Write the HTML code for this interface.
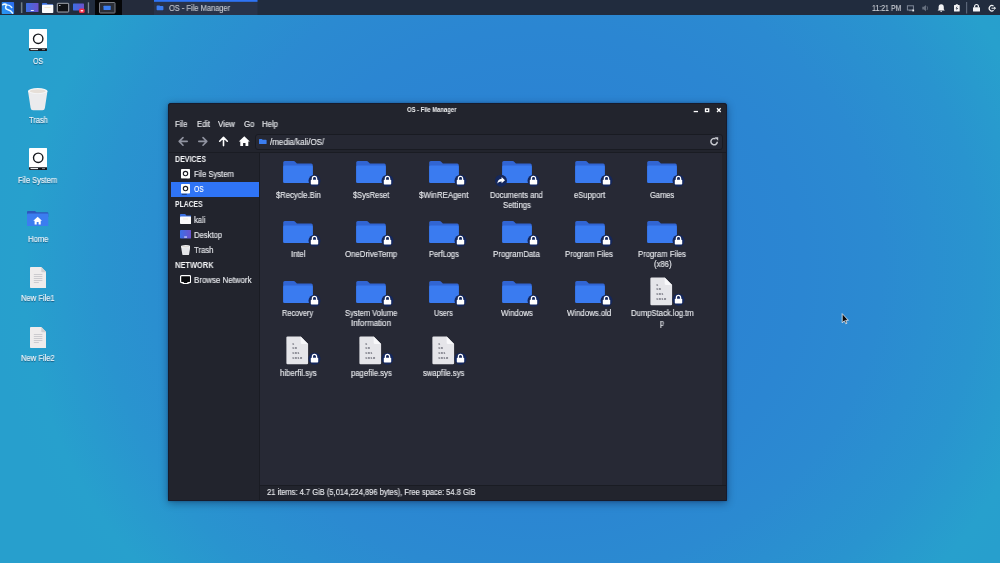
<!DOCTYPE html>
<html><head><meta charset="utf-8">
<style>
*{margin:0;padding:0;box-sizing:border-box}
html,body{width:1000px;height:563px;overflow:hidden}
body{font-family:"Liberation Sans",sans-serif;position:relative;
background:radial-gradient(ellipse 550px 500px at 540px 268px,#2b80d3 0%,#2b83d3 30%,#2b86d2 48%,#2b8ad1 62%,#2994cf 80%,#27a0cd 94%,#279fcd 100%);
color:#dfe1e6}
.abs{position:absolute}
#panel{position:absolute;left:0;top:0;width:1000px;height:15px;background:#212c3e}
.f{position:absolute;white-space:nowrap;transform-origin:0 0;will-change:transform;-webkit-text-stroke:.14px currentColor}
#win{position:absolute;left:168px;top:103px;width:559px;height:398px;background:#22242d;border-radius:3px 3px 1px 1px;box-shadow:0 2px 9px rgba(0,0,30,.38),0 0 2px rgba(0,0,30,.3)}
</style></head><body>

<svg width="0" height="0" style="position:absolute">
 <defs>
  <linearGradient id="gd" x1="0" y1="0" x2="1" y2="0"><stop offset="0" stop-color="#3b6fe6"/><stop offset="1" stop-color="#6b52cb"/></linearGradient>
  <g id="folder">
   <path d="M0 1.600Q0 0 1.6 0H10.400Q11.4 0 12.2 .9L13.7 2.600H28Q29.6 2.6 29.6 4.200V20.400Q29.6 22 28 22H1.600Q0 22 0 20.400Z" fill="#3165d3"/>
   <path d="M0 5.800Q0 4.4 1.5 4.400H28.100Q29.6 4.4 29.6 5.800V20.400Q29.6 22 28 22H1.600Q0 22 0 20.400Z" fill="#3a7bf0"/>
  </g>
  <g id="lock">
   <circle cx="0" cy="0" r="6" fill="#14275c"/>
   <path d="M-2.1 -.8V-2.300A2.1 2.1 0 0 1 2.1 -2.300V-.8" fill="none" stroke="#fff" stroke-width="1.3"/>
   <rect x="-3.7" y="-1" width="7.4" height="4.7" rx=".7" fill="#fff"/>
  </g>
  <g id="link">
   <circle cx="0" cy="0" r="6" fill="#14275c"/>
   <path d="M.6 -3.600L4 -.5L.6 2.600V.8Q-2.2 .6 -3.6 2.900Q-3.6 -1.6 .6 -2Z" fill="#fff"/>
  </g>
  <g id="file">
   <path d="M0 1.200Q0 0 1.2 0H14.300L21.7 7.600V26.700Q21.7 27.9 20.5 27.900H1.200Q0 27.9 0 26.700Z" fill="#e5e5e9"/>
   <path d="M14.3 0L21.7 7.600H15.500Q14.3 7.6 14.3 6.400Z" fill="#f8f8fa"/>
   <g fill="#6c6d78" font-family="Liberation Mono, monospace" font-weight="bold" font-size="4.4">
    <text x="5.4" y="8.5">1</text><text x="5.4" y="13.1">10</text><text x="5.4" y="17.6">101</text><text x="5.4" y="22.3">1010</text>
   </g>
  </g>
  <g id="drive"><!-- 18.3 x 22 -->
   <rect x="0" y="0" width="18.3" height="22" rx="1" fill="#fff"/>
   <path d="M0 19.300H18.300V21Q18.3 22 17.3 22H1Q0 22 0 21Z" fill="#14161c"/>
   <rect x="1.5" y="20.1" width="7.5" height="1" fill="#fff"/>
   <rect x="13" y="20.1" width="3" height="1" fill="#8a8d96"/>
   <circle cx="9.2" cy="9.8" r="4.7" fill="none" stroke="#16181e" stroke-width="1.4"/>
  </g>
  <g id="sdrive"><!-- 9 x 9.6 -->
   <rect x="0" y="0" width="9" height="9.6" rx=".8" fill="#fff"/>
   <circle cx="4.5" cy="4.6" r="2.2" fill="none" stroke="#1a1c24" stroke-width="1.1"/>
   <rect x=".8" y="9.8" width="5" height=".9" fill="#14161c" opacity=".7"/>
  </g>
 </defs>
</svg>


<div id="panel">
 <svg class="abs" style="left:0;top:0" width="270" height="15" viewBox="0 0 270 15">
  <linearGradient id="gk" x1="0" y1="1" x2="1" y2="0"><stop offset="0" stop-color="#2a9cf2"/><stop offset="1" stop-color="#2a68ee"/></linearGradient>
  <rect x="1.7" y="2" width="12.4" height="12" rx=".8" fill="url(#gk)"/>
  <path d="M2 4.400Q3.8 2.6 6.4 3.600L7.2 5.500Q4.6 4.6 2 5.600Z" fill="#eefcff"/>
  <path d="M6.4 4.900Q9.6 4.6 11.8 7.5" fill="none" stroke="#dff6ff" stroke-width="1.4" stroke-linecap="round"/>
  <path d="M6.4 5.200Q4.4 8.6 7.4 9.500Q11 10.4 12.6 13.2" fill="none" stroke="#e2f8ff" stroke-width="1.5" stroke-linecap="round"/>
  <rect x="20.9" y="2.3" width="1.5" height="10.7" fill="#6f7d86"/>
  <rect x="26" y="3" width="12.5" height="9" rx=".6" fill="url(#gd)"/><rect x="30.8" y="10" width="3" height=".9" fill="#fff"/>
  <path d="M42 3.800Q42 3 42.8 3H46.600L47.6 4.200H53V6.500H42Z" fill="#3b6fe0"/>
  <rect x="42" y="4.8" width="11.3" height="8.2" rx=".7" fill="#fbfbfc"/><rect x="44.5" y="7" width="6" height=".8" fill="#f0e4c8"/>
  <rect x="57.3" y="3.3" width="11.4" height="8.7" rx=".6" fill="#101216" stroke="#b4bac2" stroke-width=".9"/><rect x="59" y="5" width="1.5" height=".9" fill="#cfd2d8"/>
  <rect x="73" y="3.6" width="11" height="6.8" rx=".6" fill="url(#gd)"/>
  <rect x="79" y="8.6" width="5.7" height="4.3" rx="1.5" fill="#f02c48"/><rect x="80.6" y="10" width="2.6" height="1.5" rx=".5" fill="#ffe8ec"/>
  <rect x="87.8" y="2.3" width="1.3" height="11" fill="#7d8a96"/>
  <rect x="95" y="0" width="27" height="15" fill="#050608"/>
  <rect x="99.5" y="2.5" width="15.5" height="10.5" rx=".6" fill="#2b2e36" stroke="#7a7d85" stroke-width="1"/>
  <rect x="103.5" y="5.8" width="7.2" height="4.2" rx=".4" fill="#3b7df0"/>
  <rect x="122" y="0" width="32" height="15" fill="#242b3b"/>
  <rect x="154" y="0" width="103.5" height="15" fill="#28334a"/>
  <rect x="154" y="0" width="103.5" height="1.8" fill="#2f74f5"/>
  <path d="M156.6 6.100Q156.6 5.4 157.3 5.400H159.400L160.2 6.100H162.700Q163.4 6.1 163.4 6.800V9.500Q163.4 10.2 162.7 10.200H157.300Q156.6 10.2 156.6 9.500Z" fill="#3b7df0"/>
 </svg>
 <div class="f" style="left:169.00px;top:5.00px;font-size:8.2px;line-height:8.2px;color:#c3c7cf;transform:scaleX(0.9136);">OS - File Manager</div>
 <div class="f" style="left:871.90px;top:5.00px;font-size:8.2px;line-height:8.2px;color:#c9cdd4;transform:scaleX(0.8525);">11:21 PM</div>
 <svg class="abs" style="left:900px;top:0" width="100" height="15" viewBox="900 0 100 15">
  <rect x="907.4" y="5.8" width="6" height="4.2" fill="none" stroke="#7f8898" stroke-width="1"/><rect x="909" y="10.3" width="3" height=".8" fill="#7f8898"/><rect x="912.3" y="9.6" width="1.8" height="1.8" fill="#eef0f3"/>
  <path d="M922.3 6.800H923.800L926 5V11.200L923.8 9.400H922.300Z" fill="#66707f"/><path d="M927 6.200Q928.3 8.1 927 10" fill="none" stroke="#66707f" stroke-width=".8"/>
  <path d="M941.2 4.200Q943.8 4.4 943.8 7.300V9.200L944.8 10.400H937.600L938.6 9.200V7.300Q938.6 4.4 941.2 4.200Z" fill="#f2f3f5"/><rect x="940.3" y="10.8" width="1.8" height=".9" rx=".4" fill="#f2f3f5"/>
  <path d="M954 5.400Q954 4.9 954.5 4.900H955.800V4.300H957.900V4.900H959.200Q959.7 4.9 959.7 5.400V11Q959.7 11.5 959.2 11.500H954.500Q954 11.5 954 11Z" fill="#f2f3f5"/>
  <path d="M957.4 6L955.6 8.500H956.800L956.3 10.400L958.1 7.900H956.900Z" fill="#212c3e"/>
  <rect x="966" y="2" width="1.2" height="11.5" fill="#5b6678"/>
  <path d="M974.6 7.400V6.400A1.9 1.9 0 0 1 978.4 6.400V7.4" fill="none" stroke="#f2f3f5" stroke-width="1.2"/><rect x="973" y="7.2" width="7" height="4.3" rx=".5" fill="#f2f3f5"/>
  <path d="M993.6 6.100A2.7 2.7 0 1 0 993.6 10.3" fill="none" stroke="#f2f3f5" stroke-width="1.2"/><path d="M991.5 8.200H995M994 7L995.6 8.200L994 9.4" fill="none" stroke="#f2f3f5" stroke-width="1"/>
 </svg>
</div>


<svg class="abs" style="left:28.800px;top:28.9px" width="18.3" height="22" viewBox="0 0 18.3 22"><use href="#drive"/></svg>
<svg class="abs" style="left:28.200px;top:88.4px" width="19.5" height="22.2" viewBox="0 0 19.5 22.2">
 <path d="M0 3L2.6 20Q2.9 22.2 5 22.200H14.500Q16.6 22.2 16.9 20L19.5 3Z" fill="#ebebed"/>
 <ellipse cx="9.750" cy="3" rx="9.750" ry="3" fill="#f6f7f9"/><ellipse cx="9.750" cy="3.2" rx="8" ry="2" fill="#e6dfd8"/>
</svg>
<svg class="abs" style="left:28.800px;top:147.8px" width="18.3" height="22" viewBox="0 0 18.3 22"><use href="#drive"/></svg>
<svg class="abs" style="left:27.300px;top:210.5px" width="21.3" height="15.8" viewBox="0 0 21.3 15.8">
 <path d="M0 1Q0 0 1 0H8L9.5 1.200H20.300Q21.3 1.2 21.3 2.200V6H0Z" fill="#2d58bd"/>
 <rect x="0" y="2.6" width="21.3" height="13.2" rx="1" fill="#3b7df0"/>
 <path d="M10.650 5.800L6.3 9.700H7.600V13.400H9.700V10.900H11.600V13.400H13.700V9.700H15Z" fill="#fff"/>
</svg>
<svg class="abs" style="left:29.700px;top:267.3px" width="16.5" height="21" viewBox="0 0 16.5 21">
 <path d="M0 .8Q0 0 .8 0H11.300L16.5 5.200V20.200Q16.5 21 15.7 21H.8Q0 21 0 20.200Z" fill="#efecec"/>
 <path d="M11.3 0L16.5 5.200H12.100Q11.3 5.2 11.3 4.400Z" fill="#d2d0d2"/>
 <g fill="#c4c3c8"><rect x="3.8" y="7.2" width="8.6" height=".8"/><rect x="3.8" y="9.2" width="8.6" height=".8"/><rect x="3.8" y="11.2" width="8.6" height=".8"/><rect x="3.8" y="13.2" width="8.6" height=".8"/><rect x="3.8" y="15.2" width="5" height=".8"/></g>
</svg>
<svg class="abs" style="left:29.700px;top:326.8px" width="16.5" height="21" viewBox="0 0 16.5 21">
 <path d="M0 .8Q0 0 .8 0H11.300L16.5 5.200V20.200Q16.5 21 15.7 21H.8Q0 21 0 20.200Z" fill="#efecec"/>
 <path d="M11.3 0L16.5 5.200H12.100Q11.3 5.2 11.3 4.400Z" fill="#d2d0d2"/>
 <g fill="#c4c3c8"><rect x="3.8" y="7.2" width="8.6" height=".8"/><rect x="3.8" y="9.2" width="8.6" height=".8"/><rect x="3.8" y="11.2" width="8.6" height=".8"/><rect x="3.8" y="13.2" width="8.6" height=".8"/><rect x="3.8" y="15.2" width="5" height=".8"/></g>
</svg>
<div class="f" style="left:33.30px;top:58.00px;font-size:8.2px;line-height:8.2px;color:#f4f7fb;transform:scaleX(0.8609);text-shadow:0 .6px 1px rgba(0,20,50,.55);">OS</div>
<div class="f" style="left:29.10px;top:117.00px;font-size:8.2px;line-height:8.2px;color:#f4f7fb;transform:scaleX(0.9150);text-shadow:0 .6px 1px rgba(0,20,50,.55);">Trash</div>
<div class="f" style="left:17.80px;top:177.00px;font-size:8.2px;line-height:8.2px;color:#f4f7fb;transform:scaleX(0.9129);text-shadow:0 .6px 1px rgba(0,20,50,.55);">File System</div>
<div class="f" style="left:27.80px;top:236.00px;font-size:8.2px;line-height:8.2px;color:#f4f7fb;transform:scaleX(0.9327);text-shadow:0 .6px 1px rgba(0,20,50,.55);">Home</div>
<div class="f" style="left:21.10px;top:295.00px;font-size:8.2px;line-height:8.2px;color:#f4f7fb;transform:scaleX(0.9244);text-shadow:0 .6px 1px rgba(0,20,50,.55);">New File1</div>
<div class="f" style="left:21.10px;top:355.00px;font-size:8.2px;line-height:8.2px;color:#f4f7fb;transform:scaleX(0.9244);text-shadow:0 .6px 1px rgba(0,20,50,.55);">New File2</div>
<div id="win">
 <div class="abs" id="content" style="left:92px;top:49px;width:462px;height:333px;background:#272935"></div>
 <!-- title -->
 <div class="f" style="left:238.65px;top:4.00px;font-size:6.6px;line-height:6.6px;font-weight:bold;-webkit-text-stroke:0;color:#f2f3f5;transform:scaleX(0.8853);">OS - File Manager</div>
 <svg class="abs" style="left:520px;top:2px" width="36" height="10" viewBox="688 105 36 10">
  <rect x="693.7" y="110.9" width="4.3" height="1.3" fill="#fff"/>
  <rect x="705.5" y="108.9" width="3.2" height="2.7" fill="none" stroke="#fff" stroke-width="1.3"/>
  <path d="M717 108.300l3.7 3.700M720.7 108.300l-3.7 3.7" stroke="#fff" stroke-width="1.3"/>
 </svg>
 <!-- menu -->
 <div class="f" style="left:7.40px;top:18.00px;font-size:8.2px;line-height:8.2px;color:#e8eaee;transform:scaleX(0.9385);">File</div>
 <div class="f" style="left:28.60px;top:18.00px;font-size:8.2px;line-height:8.2px;color:#e8eaee;transform:scaleX(0.9342);">Edit</div>
 <div class="f" style="left:50.40px;top:18.00px;font-size:8.2px;line-height:8.2px;color:#e8eaee;transform:scaleX(0.9532);">View</div>
 <div class="f" style="left:75.80px;top:18.00px;font-size:8.2px;line-height:8.2px;color:#e8eaee;transform:scaleX(0.9508);">Go</div>
 <div class="f" style="left:94.20px;top:18.00px;font-size:8.2px;line-height:8.2px;color:#e8eaee;transform:scaleX(0.9488);">Help</div>
 <!-- toolbar -->
 <svg class="abs" style="left:8px;top:32px" width="80" height="14" viewBox="176 135 80 14" fill="none" stroke-linecap="round" stroke-linejoin="round">
  <path d="M187.2 141.400H179.400M183 137.600L179.2 141.400L183 145.2" stroke="#9093a0" stroke-width="1.6"/>
  <path d="M198.8 141.400H206.600M203 137.600L206.8 141.400L203 145.2" stroke="#9093a0" stroke-width="1.6"/>
  <path d="M223.5 145.600V137.600M219.7 141.200L223.5 137.400L227.3 141.2" stroke="#fff" stroke-width="1.6"/>
  <path d="M244.3 136.300L238.8 141.400H240.300V146H243.100V142.900H245.500V146H248.300V141.400H249.800Z" fill="#fff" stroke="none"/>
 </svg>
 <div class="abs" style="left:87px;top:31px;width:467.500px;height:16px;background:#262833;border:1px solid #191b22;border-radius:3px"></div>
 <svg class="abs" style="left:91.400px;top:36.200px" width="7.6" height="5" viewBox="0 0 7.6 5"><path d="M0 .6Q0 0 .6 0H2.800L3.6 .7H7Q7.6 .7 7.6 1.300V4.400Q7.6 5 7 5H.6Q0 5 0 4.400Z" fill="#3b7df0"/></svg>
 <div class="f" style="left:102.20px;top:36.00px;font-size:8.2px;line-height:8.2px;color:#e8eaee;transform:scaleX(0.9749);">/media/kali/OS/</div>
 <svg class="abs" style="left:541px;top:34px" width="10" height="10" viewBox="709 137 10 10" fill="none"><path d="M717.3 141.800A3.2 3.2 0 1 1 715.6 138.8" stroke="#c8cad0" stroke-width="1.5"/><path d="M714.6 137.200H718.200V140.800Z" fill="#c8cad0"/></svg>
 <!-- sidebar -->
 <div class="abs" style="left:0;top:48.500px;width:559px;height:1px;background:#1a1c23"></div>
 <div class="abs" style="left:91px;top:49px;width:1px;height:349px;background:#1a1c23"></div>
 <div class="abs" style="left:3.300px;top:79.300px;width:87.700px;height:14.700px;background:#2f74f5"></div>
  <div class="f" style="left:7.30px;top:53.00px;font-size:8.2px;line-height:8.2px;font-weight:bold;-webkit-text-stroke:0;color:#f2f3f5;transform:scaleX(0.8639);">DEVICES</div>
 <div class="f" style="left:25.90px;top:68.00px;font-size:8.2px;line-height:8.2px;color:#e8eaee;transform:scaleX(0.9316);">File System</div>
 <div class="f" style="left:25.90px;top:83.00px;font-size:8.2px;line-height:8.2px;color:#fff;transform:scaleX(0.8272);">OS</div>
 <div class="f" style="left:7.30px;top:98.00px;font-size:8.2px;line-height:8.2px;font-weight:bold;-webkit-text-stroke:0;color:#f2f3f5;transform:scaleX(0.8328);">PLACES</div>
 <div class="f" style="left:25.90px;top:114.00px;font-size:8.2px;line-height:8.2px;color:#e8eaee;transform:scaleX(0.9347);">kali</div>
 <div class="f" style="left:25.90px;top:129.00px;font-size:8.2px;line-height:8.2px;color:#e8eaee;transform:scaleX(0.9342);">Desktop</div>
 <div class="f" style="left:26.10px;top:144.00px;font-size:8.2px;line-height:8.2px;color:#e8eaee;transform:scaleX(0.9441);">Trash</div>
 <div class="f" style="left:7.30px;top:159.00px;font-size:8.2px;line-height:8.2px;font-weight:bold;-webkit-text-stroke:0;color:#f2f3f5;transform:scaleX(0.9112);">NETWORK</div>
 <div class="f" style="left:25.90px;top:174.00px;font-size:8.2px;line-height:8.2px;color:#e8eaee;transform:scaleX(0.9650);">Browse Network</div>
 
 <svg class="abs" style="left:13px;top:65.7px" width="10" height="11" viewBox="0 0 10 11"><use href="#sdrive"/></svg>
 <svg class="abs" style="left:13px;top:80.8px" width="10" height="11" viewBox="0 0 10 11"><use href="#sdrive"/></svg>
 <svg class="abs" style="left:11.8px;top:111.4px" width="11.2" height="10" viewBox="0 0 11.2 10">
  <path d="M0 .8Q0 0 .8 0H5.200L6.4 1.400H11.200V4H0Z" fill="#3b6fe0"/>
  <rect x="0" y="2.6" width="11.2" height="7.4" rx=".8" fill="#fbfbfc"/>
  <rect x="3" y="4.6" width="5" height=".8" fill="#f0e6d8"/>
 </svg>
 <svg class="abs" style="left:11.8px;top:127.0px" width="11.2" height="8.5" viewBox="0 0 11.2 8.5">
  <rect width="11.2" height="8.5" rx=".7" fill="url(#gd)"/><rect x="4.2" y="6.6" width="2.8" height=".9" fill="#fff"/>
 </svg>
 <svg class="abs" style="left:12.7px;top:141.7px" width="9.4" height="10.3" viewBox="0 0 9.4 10.3">
  <path d="M0 1.500L1.3 9.300Q1.5 10.3 2.5 10.300H6.900Q7.9 10.3 8.1 9.300L9.4 1.500Z" fill="#e4e5e8"/>
  <ellipse cx="4.7" cy="1.5" rx="4.7" ry="1.5" fill="#f4f5f7"/><ellipse cx="4.7" cy="1.6" rx="3.7" ry=".9" fill="#dcd8d4"/>
 </svg>
 <svg class="abs" style="left:11.8px;top:172.0px" width="11.2" height="9.2" viewBox="0 0 11.2 9.2">
  <path d="M.6 1.600Q.6 .6 1.6 .6H9.600Q10.6 .6 10.6 1.600V6.600Q10.6 7.6 9.6 7.600H8V8.600H3.200V7.600H1.600Q.6 7.6 .6 6.600Z" fill="#08090c" stroke="#fff" stroke-width="1.2"/>
 </svg>

 <!-- status -->
 <div class="abs" style="left:92px;top:381.500px;width:467px;height:1px;background:#1a1c23"></div>
 <div class="f" style="left:99.00px;top:386.00px;font-size:8.2px;line-height:8.2px;color:#e8eaee;transform:scaleX(0.9199);">21 items: 4.7 GiB (5,014,224,896 bytes), Free space: 54.8 GiB</div>
 <div class="abs" style="left:0;top:0;width:559px;height:398px;border:1px solid #171b2c;border-radius:3px 3px 1px 1px"></div>
 <!-- icons -->
 <svg class="abs" style="left:105.0px;top:52.0px;will-change:transform" width="50" height="36" viewBox="-25 -6 50 36"><use href="#folder" x="-14.8" y="0"/><use href="#lock" x="16.5" y="19.7"/></svg>
 <div class="f" style="left:107.60px;top:89.00px;font-size:8.2px;line-height:8.2px;color:#e8eaee;transform:scaleX(0.9362);">$Recycle.Bin</div>
 <svg class="abs" style="left:178.0px;top:52.0px;will-change:transform" width="50" height="36" viewBox="-25 -6 50 36"><use href="#folder" x="-14.8" y="0"/><use href="#lock" x="16.5" y="19.7"/></svg>
 <div class="f" style="left:184.85px;top:89.00px;font-size:8.2px;line-height:8.2px;color:#e8eaee;transform:scaleX(0.9155);">$SysReset</div>
 <svg class="abs" style="left:250.7px;top:52.0px;will-change:transform" width="50" height="36" viewBox="-25 -6 50 36"><use href="#folder" x="-14.8" y="0"/><use href="#lock" x="16.5" y="19.7"/></svg>
 <div class="f" style="left:250.95px;top:89.00px;font-size:8.2px;line-height:8.2px;color:#e8eaee;transform:scaleX(0.9611);">$WinREAgent</div>
 <svg class="abs" style="left:323.8px;top:52.0px;will-change:transform" width="50" height="36" viewBox="-25 -6 50 36"><use href="#folder" x="-14.8" y="0"/><use href="#link" x="-16" y="19.7"/><use href="#lock" x="16.5" y="19.7"/></svg>
 <div class="f" style="left:322.40px;top:89.00px;font-size:8.2px;line-height:8.2px;color:#e8eaee;transform:scaleX(0.9194);">Documents and</div>
 <div class="f" style="left:334.85px;top:99.00px;font-size:8.2px;line-height:8.2px;color:#e8eaee;transform:scaleX(0.9417);">Settings</div>
 <svg class="abs" style="left:396.5px;top:52.0px;will-change:transform" width="50" height="36" viewBox="-25 -6 50 36"><use href="#folder" x="-14.8" y="0"/><use href="#lock" x="16.5" y="19.7"/></svg>
 <div class="f" style="left:405.90px;top:89.00px;font-size:8.2px;line-height:8.2px;color:#e8eaee;transform:scaleX(0.9376);">eSupport</div>
 <svg class="abs" style="left:469.3px;top:52.0px;will-change:transform" width="50" height="36" viewBox="-25 -6 50 36"><use href="#folder" x="-14.8" y="0"/><use href="#lock" x="16.5" y="19.7"/></svg>
 <div class="f" style="left:482.20px;top:89.00px;font-size:8.2px;line-height:8.2px;color:#e8eaee;transform:scaleX(0.9157);">Games</div>
 <svg class="abs" style="left:105.0px;top:111.8px;will-change:transform" width="50" height="36" viewBox="-25 -6 50 36"><use href="#folder" x="-14.8" y="0"/><use href="#lock" x="16.5" y="19.7"/></svg>
 <div class="f" style="left:122.75px;top:148.00px;font-size:8.2px;line-height:8.2px;color:#e8eaee;transform:scaleX(0.9356);">Intel</div>
 <svg class="abs" style="left:178.0px;top:111.8px;will-change:transform" width="50" height="36" viewBox="-25 -6 50 36"><use href="#folder" x="-14.8" y="0"/><use href="#lock" x="16.5" y="19.7"/></svg>
 <div class="f" style="left:176.90px;top:148.00px;font-size:8.2px;line-height:8.2px;color:#e8eaee;transform:scaleX(0.9546);">OneDriveTemp</div>
 <svg class="abs" style="left:250.7px;top:111.8px;will-change:transform" width="50" height="36" viewBox="-25 -6 50 36"><use href="#folder" x="-14.8" y="0"/><use href="#lock" x="16.5" y="19.7"/></svg>
 <div class="f" style="left:260.75px;top:148.00px;font-size:8.2px;line-height:8.2px;color:#e8eaee;transform:scaleX(0.9111);">PerfLogs</div>
 <svg class="abs" style="left:323.8px;top:111.8px;will-change:transform" width="50" height="36" viewBox="-25 -6 50 36"><use href="#folder" x="-14.8" y="0"/><use href="#lock" x="16.5" y="19.7"/></svg>
 <div class="f" style="left:325.35px;top:148.00px;font-size:8.2px;line-height:8.2px;color:#e8eaee;transform:scaleX(0.9618);">ProgramData</div>
 <svg class="abs" style="left:396.5px;top:111.8px;will-change:transform" width="50" height="36" viewBox="-25 -6 50 36"><use href="#folder" x="-14.8" y="0"/><use href="#lock" x="16.5" y="19.7"/></svg>
 <div class="f" style="left:397.45px;top:148.00px;font-size:8.2px;line-height:8.2px;color:#e8eaee;transform:scaleX(0.9426);">Program Files</div>
 <svg class="abs" style="left:469.3px;top:111.8px;will-change:transform" width="50" height="36" viewBox="-25 -6 50 36"><use href="#folder" x="-14.8" y="0"/><use href="#lock" x="16.5" y="19.7"/></svg>
 <div class="f" style="left:470.25px;top:148.00px;font-size:8.2px;line-height:8.2px;color:#e8eaee;transform:scaleX(0.9426);">Program Files</div>
 <div class="f" style="left:485.50px;top:158.00px;font-size:8.2px;line-height:8.2px;color:#e8eaee;transform:scaleX(0.9422);">(x86)</div>
 <svg class="abs" style="left:105.0px;top:171.5px;will-change:transform" width="50" height="36" viewBox="-25 -6 50 36"><use href="#folder" x="-14.8" y="0"/><use href="#lock" x="16.5" y="19.7"/></svg>
 <div class="f" style="left:114.45px;top:207.00px;font-size:8.2px;line-height:8.2px;color:#e8eaee;transform:scaleX(0.8980);">Recovery</div>
 <svg class="abs" style="left:178.0px;top:171.5px;will-change:transform" width="50" height="36" viewBox="-25 -6 50 36"><use href="#folder" x="-14.8" y="0"/><use href="#lock" x="16.5" y="19.7"/></svg>
 <div class="f" style="left:176.80px;top:207.00px;font-size:8.2px;line-height:8.2px;color:#e8eaee;transform:scaleX(0.9199);">System Volume</div>
 <div class="f" style="left:182.95px;top:217.00px;font-size:8.2px;line-height:8.2px;color:#e8eaee;transform:scaleX(0.9777);">Information</div>
 <svg class="abs" style="left:250.7px;top:171.5px;will-change:transform" width="50" height="36" viewBox="-25 -6 50 36"><use href="#folder" x="-14.8" y="0"/><use href="#lock" x="16.5" y="19.7"/></svg>
 <div class="f" style="left:266.25px;top:207.00px;font-size:8.2px;line-height:8.2px;color:#e8eaee;transform:scaleX(0.8827);">Users</div>
 <svg class="abs" style="left:323.8px;top:171.5px;will-change:transform" width="50" height="36" viewBox="-25 -6 50 36"><use href="#folder" x="-14.8" y="0"/><use href="#lock" x="16.5" y="19.7"/></svg>
 <div class="f" style="left:332.85px;top:207.00px;font-size:8.2px;line-height:8.2px;color:#e8eaee;transform:scaleX(0.9590);">Windows</div>
 <svg class="abs" style="left:396.5px;top:171.5px;will-change:transform" width="50" height="36" viewBox="-25 -6 50 36"><use href="#folder" x="-14.8" y="0"/><use href="#lock" x="16.5" y="19.7"/></svg>
 <div class="f" style="left:399.30px;top:207.00px;font-size:8.2px;line-height:8.2px;color:#e8eaee;transform:scaleX(0.9552);">Windows.old</div>
 <svg class="abs" style="left:469.3px;top:171.5px;will-change:transform" width="50" height="36" viewBox="-25 -6 50 36"><use href="#file" x="-11.6" y="-3.6"/><use href="#lock" x="16.5" y="18.8"/></svg>
 <div class="f" style="left:462.90px;top:207.00px;font-size:8.2px;line-height:8.2px;color:#e8eaee;transform:scaleX(0.9375);">DumpStack.log.tm</div>
 <div class="f" style="left:492.35px;top:217.00px;font-size:8.2px;line-height:8.2px;color:#e8eaee;transform:scaleX(0.8553);">p</div>
 <svg class="abs" style="left:105.0px;top:231.2px;will-change:transform" width="50" height="36" viewBox="-25 -6 50 36"><use href="#file" x="-11.6" y="-3.6"/><use href="#lock" x="16.5" y="18.8"/></svg>
 <div class="f" style="left:111.60px;top:267.00px;font-size:8.2px;line-height:8.2px;color:#e8eaee;transform:scaleX(0.9501);">hiberfil.sys</div>
 <svg class="abs" style="left:178.0px;top:231.2px;will-change:transform" width="50" height="36" viewBox="-25 -6 50 36"><use href="#file" x="-11.6" y="-3.6"/><use href="#lock" x="16.5" y="18.8"/></svg>
 <div class="f" style="left:182.60px;top:267.00px;font-size:8.2px;line-height:8.2px;color:#e8eaee;transform:scaleX(0.9423);">pagefile.sys</div>
 <svg class="abs" style="left:250.7px;top:231.2px;will-change:transform" width="50" height="36" viewBox="-25 -6 50 36"><use href="#file" x="-11.6" y="-3.6"/><use href="#lock" x="16.5" y="18.8"/></svg>
 <div class="f" style="left:255.00px;top:267.00px;font-size:8.2px;line-height:8.2px;color:#e8eaee;transform:scaleX(0.9366);">swapfile.sys</div>
</div>
<svg class="abs" style="left:840px;top:312px" width="12" height="14" viewBox="0 0 12 14"><path d="M2.2 1.600V10.800L4.4 8.800L5.8 11.800L7 11.200L5.7 8.300H8.400Z" fill="#0a0a0c" stroke="#e8f0f8" stroke-width=".8" stroke-linejoin="round"/></svg>
</body></html>
